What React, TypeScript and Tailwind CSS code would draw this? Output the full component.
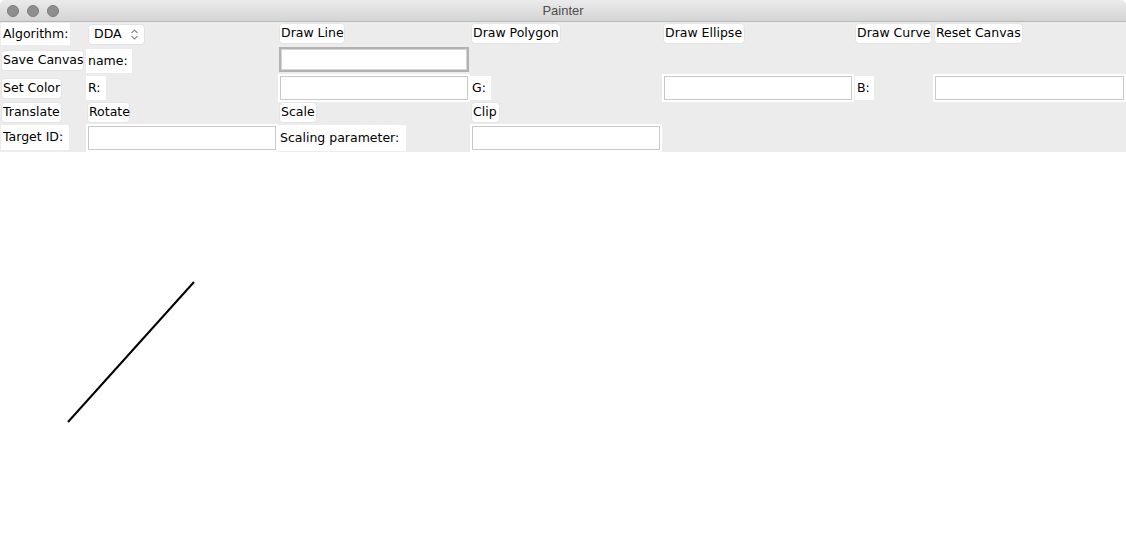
const font = { fontFamily: '"DejaVu Sans", Verdana, sans-serif' }

function Btn({ label, className = '' }: { label: string; className?: string }) {
  return (
    <div
      className={`flex items-center h-[21px] pl-[1px] bg-white rounded-[4px] border border-[#e4e4e4] whitespace-nowrap text-black ${className}`}
    >
      {label}
    </div>
  )
}

function Lbl({ label, className = '' }: { label: string; className?: string }) {
  return <div className={`flex items-center pl-[2px] bg-white whitespace-nowrap text-black ${className}`}>{label}</div>
}

function Entry({ className = '' }: { className?: string }) {
  return (
    <div className={`bg-white p-[2px] ${className}`}>
      <div className="w-full h-full border border-[#c9c9c9] bg-white"></div>
    </div>
  )
}

export default function App() {
  return (
    <div className="w-[1126px] h-[558px] bg-white flex flex-col overflow-hidden text-[12.5px]" style={font}>
      {/* Title bar */}
      <div className="relative h-[22px] shrink-0 rounded-t-[5px] bg-gradient-to-b from-[#ebebeb] to-[#d4d4d4] border-b border-[#b9b9b9] flex items-center justify-center">
        <div className="absolute left-[7px] top-[5px] flex gap-[8px]">
          <div className="w-[12px] h-[12px] rounded-full bg-[#8e8e8e] border border-[#7e7e7e]"></div>
          <div className="w-[12px] h-[12px] rounded-full bg-[#8e8e8e] border border-[#7e7e7e]"></div>
          <div className="w-[12px] h-[12px] rounded-full bg-[#8e8e8e] border border-[#7e7e7e]"></div>
        </div>
        <span className="text-[13px] text-[#4d4d4d]" style={{ fontFamily: '"Liberation Sans", Arial, sans-serif' }}>
          Painter
        </span>
      </div>

      {/* Controls */}
      <div className="shrink-0 bg-[#ececec] grid grid-cols-[86px_192px_192px_192px_192px_79px_193px] grid-rows-[24px_28px_28px_22px_28px] items-start justify-items-start">
        {/* row 1 */}
        <Lbl label="Algorithm:" className="ml-[1px] mt-[1px] h-[22px] w-[69px]" />
        <div className="ml-[2px] mt-[2px] w-[57px] h-[21px] bg-white rounded-[4px] border border-[#e2e2e2] flex items-center justify-between pl-[5px] pr-[5px] text-black">
          <span>DDA</span>
          <svg width="9" height="13" viewBox="0 0 9 13" fill="none" stroke="#8a8a8a" strokeWidth="1.1">
            <path d="M1.5 5 L4.5 2 L7.5 5" />
            <path d="M1.5 8 L4.5 11 L7.5 8" />
          </svg>
        </div>
        <Btn label="Draw Line" className="ml-[1px] mt-[1px] w-[66px]" />
        <Btn label="Draw Polygon" className="ml-[1px] mt-[1px] w-[90px]" />
        <Btn label="Draw Ellipse" className="ml-[1px] mt-[1px] w-[82px]" />
        <Btn label="Draw Curve" className="ml-[1px] mt-[1px] w-[77px]" />
        <Btn label="Reset Canvas" className="ml-[1px] mt-[1px] w-[89px]" />

        {/* row 2 */}
        <Btn label="Save Canvas" className="ml-[1px] mt-[4px] w-[83px]" />
        <Lbl label="name:" className="mt-[3px] h-[24px] w-[46px]" />
        <div className="ml-[1px] mt-[1px] w-[190px] h-[25px] bg-white border-2 border-[#b2b2b2] shadow-[inset_0_0_0_1px_#d6d6d6]"></div>
        <div></div>
        <div></div>
        <div></div>
        <div></div>

        {/* row 3 */}
        <Btn label="Set Color" className="ml-[1px] mt-[4px] h-[20px] w-[61px]" />
        <Lbl label="R:" className="mt-[2px] h-[24px] w-[20px]" />
        <Entry className="w-[192px] h-[28px]" />
        <Lbl label="G:" className="mt-[2px] h-[24px] w-[21px]" />
        <Entry className="w-[192px] h-[28px]" />
        <Lbl label="B:" className="ml-[1px] mt-[2px] h-[24px] w-[19px]" />
        <Entry className="w-[193px] h-[28px]" />

        {/* row 4 */}
        <Btn label="Translate" className="ml-[1px] w-[61px]" />
        <Btn label="Rotate" className="ml-[1px] w-[43px]" />
        <Btn label="Scale" className="ml-[1px] w-[38px]" />
        <Btn label="Clip" className="ml-[1px] w-[29px]" />
        <div></div>
        <div></div>
        <div></div>

        {/* row 5 */}
        <Lbl label="Target ID:" className="ml-[1px] mt-[1px] h-[25px] w-[68px]" />
        <Entry className="w-[192px] h-[28px]" />
        <Lbl label="Scaling parameter:" className="mt-[1px] h-[26px] w-[128px]" />
        <Entry className="w-[192px] h-[28px]" />
      </div>

      {/* Canvas */}
      <div className="flex-1 bg-white relative">
        <svg className="absolute inset-0" width="1126" height="406">
          <line x1="68" y1="270" x2="194" y2="130" stroke="#000" strokeWidth="2" />
        </svg>
      </div>
    </div>
  )
}
